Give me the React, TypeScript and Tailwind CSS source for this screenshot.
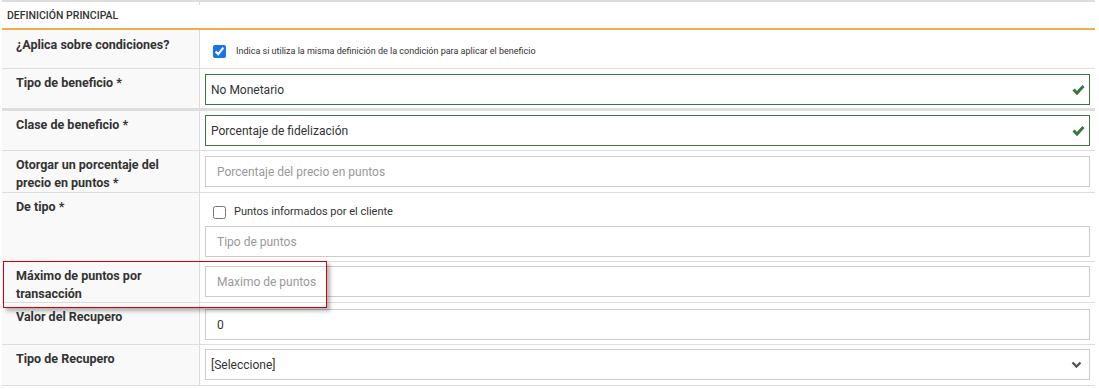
import type { ReactNode } from "react";

function GreenCheck() {
  return (
    <svg width="13" height="12" viewBox="0 0 13 12" className="shrink-0">
      <path d="M1.5 5.5 L5 9 L11.5 2" fill="none" stroke="#3c763d" strokeWidth="3" strokeLinecap="butt" strokeLinejoin="miter" />
    </svg>
  );
}

function Chevron() {
  return (
    <svg width="11" height="8" viewBox="0 0 11 8" className="shrink-0">
      <path d="M1.5 1.5 L5.5 5.5 L9.5 1.5" fill="none" stroke="#555" strokeWidth="2.4" />
    </svg>
  );
}

function Row({
  label,
  children,
  thick,
  h,
  pt,
}: {
  label: ReactNode;
  children: ReactNode;
  thick?: boolean;
  h: string;
  pt: string;
}) {
  return (
    <div className={`flex ${h} ${thick ? "border-b-[3px]" : "border-b"} border-[#dddddd]`}>
      <div className="w-[198px] shrink-0 bg-[#f9f9f9] border-r border-[#dddddd] pl-[14px] pr-2 pt-[5px] text-[12.5px] leading-[17.5px] font-bold text-[#333]">
        {label}
      </div>
      <div className={`flex-1 px-[5px] ${pt}`}>{children}</div>
    </div>
  );
}

function Field({
  value,
  placeholder,
  valid,
  select,
  indent,
}: {
  value?: string;
  placeholder?: string;
  valid?: boolean;
  select?: boolean;
  indent?: boolean;
}) {
  return (
    <div
      className={`h-[31px] flex items-center justify-between bg-white border ${
        valid ? "border-[#3c763d]" : "border-[#cccccc]"
      } ${indent || placeholder ? "pl-[11px]" : "pl-[5px]"} ${valid ? "pr-[4px]" : "pr-[7px]"} text-[12px]`}
    >
      {value ? (
        <span className="text-[#333]">{value}</span>
      ) : (
        <span className="text-[#999]">{placeholder}</span>
      )}
      {valid && <GreenCheck />}
      {select && <Chevron />}
    </div>
  );
}

export default function App() {
  return (
    <div className="relative w-[1099px] h-[389px] bg-white font-['Roboto',sans-serif] overflow-hidden">
      <div className="ml-[2px] w-[1093px] h-[5px] border-t-2 border-[#dddddd] flex">
        <div className="w-[198px] border-r border-[#dddddd]" />
      </div>
      <div className="ml-[2px] w-[1093px] h-[25px] flex items-center pl-[5px] pb-[2px] border-b-2 border-[#f0ad4e] text-[10.5px] font-medium text-[#333] uppercase">
        Definición principal
      </div>
      <div className="ml-[2px] w-[1093px]">
        <div className="flex border-b border-[#dddddd] h-[39px]">
          <div className="w-[198px] shrink-0 bg-[#f9f9f9] border-r border-[#dddddd] pl-[14px] pt-[6px] text-[12.5px] leading-[17px] font-bold text-[#333]">
            ¿Aplica sobre condiciones?
          </div>
          <div className="flex-1 flex items-center pl-[13px] pt-[5px]">
            <input type="checkbox" defaultChecked className="w-[13px] h-[13px] accent-[#1a73e8] m-0" />
            <span className="ml-[10px] text-[9px] text-[#333]">
              Indica si utiliza la misma definición de la condición para aplicar el beneficio
            </span>
          </div>
        </div>
        <Row label="Tipo de beneficio *" thick h="h-[42px]" pt="pt-[5px]">
          <Field value="No Monetario" valid />
        </Row>
        <Row label="Clase de beneficio *" h="h-[40px]" pt="pt-[4px]">
          <Field value="Porcentaje de fidelización" valid />
        </Row>
        <Row label={<>Otorgar un porcentaje del<br />precio en puntos *</>} h="h-[42px]" pt="pt-[5px]">
          <Field placeholder="Porcentaje del precio en puntos" />
        </Row>
        <Row label="De tipo *" h="h-[69px]" pt="pt-[4px]">
          <div className="flex items-center h-[29px] pl-[8px] pt-[2px]">
            <input type="checkbox" className="w-[13px] h-[13px] m-0" />
            <span className="ml-[8px] text-[11px] text-[#333]">Puntos informados por el cliente</span>
          </div>
          <Field placeholder="Tipo de puntos" />
        </Row>
        <Row label={<>Máximo de puntos por<br />transacción</>} h="h-[41px]" pt="pt-[4px]">
          <Field placeholder="Maximo de puntos" />
        </Row>
        <Row label="Valor del Recupero" h="h-[42px]" pt="pt-[6px]">
          <Field value="0" indent />
        </Row>
        <Row label="Tipo de Recupero" h="h-[41px]" pt="pt-[4px]">
          <Field value="[Seleccione]" select />
        </Row>
      </div>
      <div className="absolute left-[3px] top-[261px] w-[324px] h-[47px] border border-[#d40000] shadow-[3px_3px_4px_rgba(0,0,0,0.3)]" />
    </div>
  );
}
